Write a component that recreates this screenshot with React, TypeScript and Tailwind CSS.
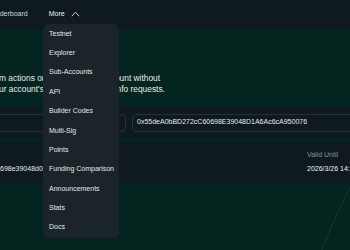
import React from "react";

const items = [
  "Testnet",
  "Explorer",
  "Sub-Accounts",
  "API",
  "Builder Codes",
  "Multi-Sig",
  "Points",
  "Funding Comparison",
  "Announcements",
  "Stats",
  "Docs",
];

export default function App() {
  return (
    <div
      className="relative w-[350px] h-[250px] overflow-hidden bg-[#04241f] text-[#e6e9ea]"
      style={{ fontFamily: '"Liberation Sans", Arial, sans-serif' }}
    >
      {/* header */}
      <div className="h-[29px] bg-[#0f1a1f] flex items-center text-[7px] whitespace-nowrap">
        <span className="ml-[-12px] text-[#d3d8da]">Leaderboard</span>
        <span className="ml-[21px] text-[#eef0f1]">More</span>
        <svg className="ml-[6px] mb-[2px]" width="9" height="6" viewBox="0 0 9 6">
          <polyline points="0.8,5.2 4.5,1.2 8.2,5.2" fill="none" stroke="#c9cfd2" strokeWidth="1" />
        </svg>
      </div>

      {/* description */}
      <div className="pt-[43.5px] text-[8.4px] leading-[11.5px] whitespace-nowrap">
        <div className="ml-[-1px]">m actions on behalf of your account without</div>
        <div className="ml-[-1px]">ur account's public address for info requests.</div>
      </div>

      {/* input band */}
      <div className="mt-[10.5px] h-[33px] bg-[#0f1a1f] flex items-center text-[7px] whitespace-nowrap">
        <div className="ml-[-14px] w-[140px] h-[18px] rounded-[4px] border border-[#263137] shrink-0" />
        <div className="ml-[6px] w-[260px] h-[18px] rounded-[4px] border border-[#263137] shrink-0 flex items-center pl-[4px] text-[#e6e9ea]">
          0x55deA0bBD272cC60698E39048D1A6Ac6cA950076
        </div>
      </div>

      {/* table band */}
      <div className="mt-[4px] h-[40px] bg-[#0f1a1f] flex text-[7px] leading-[10px] whitespace-nowrap">
        <div className="w-[307px] shrink-0 pt-[21px]">
          <div className="text-[#e6e9ea]">698e39048d0a2f71c</div>
        </div>
        <div className="shrink-0 pt-[7px] flex flex-col gap-[4px]">
          <div className="text-[#8a9397]">Valid Until</div>
          <div className="text-[#eef0f1]">2026/3/26 14:32</div>
        </div>
      </div>

      {/* decorative curve */}
      <svg className="absolute left-0 top-0 pointer-events-none" width="350" height="250">
        <path d="M352 184 Q 336 214 321 252" fill="none" stroke="#0f3a31" strokeWidth="1" />
      </svg>

      {/* dropdown */}
      <div className="absolute left-[43px] top-[24px] w-[76px] h-[214px] rounded-[6px] bg-[#1b2429] flex flex-col pt-[0.3px] text-[7px] whitespace-nowrap">
        {items.map((t) => (
          <div key={t} className="h-[19.37px] flex items-center pl-[6px] text-[#e4e7e9]">
            {t}
          </div>
        ))}
      </div>
    </div>
  );
}
